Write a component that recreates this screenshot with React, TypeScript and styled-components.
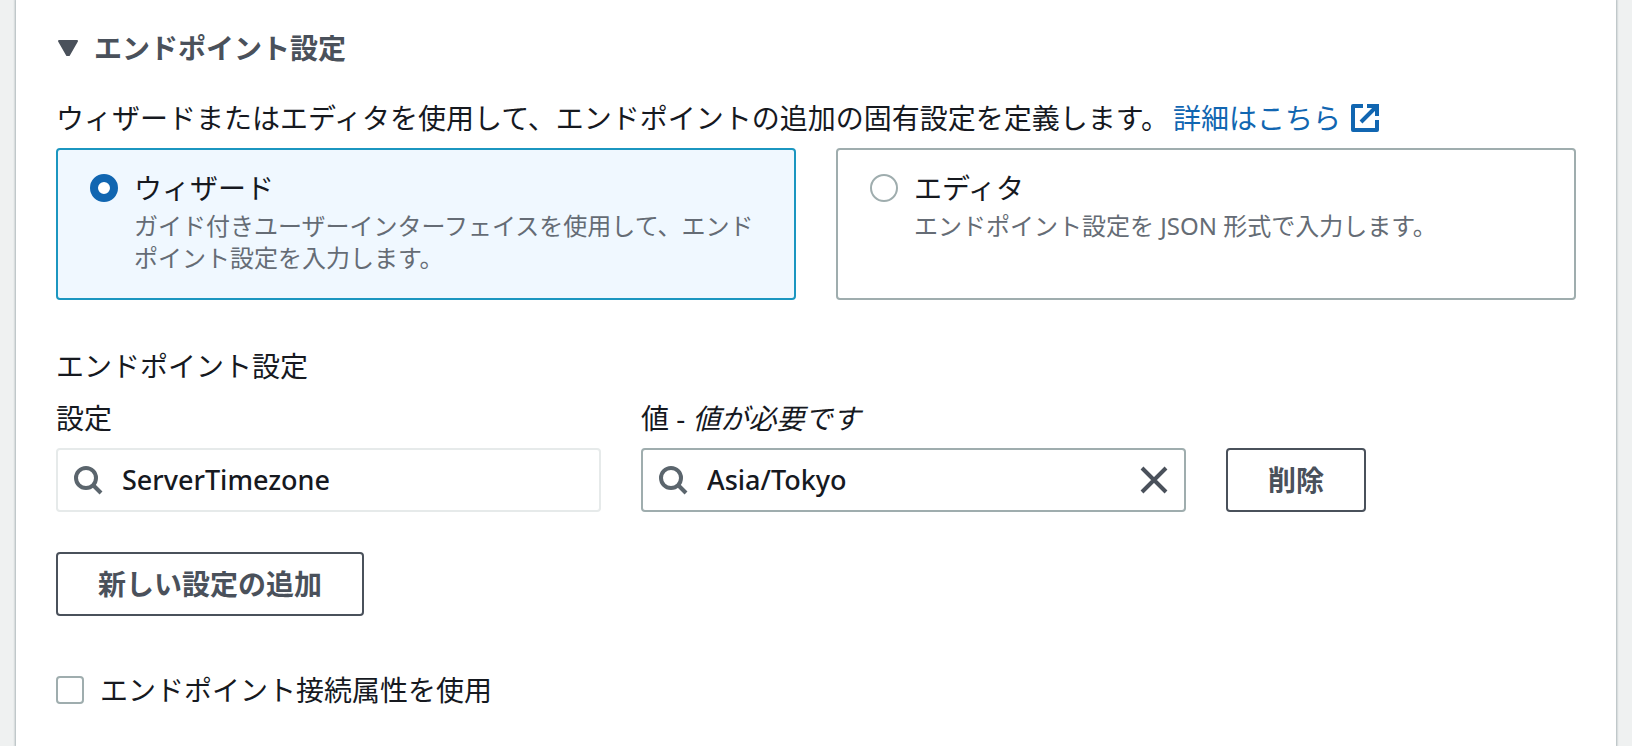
import React, { useState } from "react";
import styled, { createGlobalStyle } from "styled-components";

const color = {
  page: "#eff1f1",
  text: "#16191f",
  muted: "#656c75",
  strong: "#4a515b",
  link: "#1166b1",
  accent: "#1b96c0",
  selected: "#f0f8ff",
  border: "#9fadae",
  faint: "#e6eaea",
};

const GlobalStyle = createGlobalStyle`
  * { box-sizing: border-box; }
  body {
    margin: 0;
    background: ${color.page};
    color: ${color.text};
    font-family: "Noto Sans", "Noto Sans CJK JP", sans-serif;
    font-size: 28px;
    line-height: 44px;
  }
  button, input { font: inherit; color: inherit; }
`;

const Panel = styled.main`
  min-height: 100vh;
  margin: 0 16px;
  padding: 26px 40px 24px;
  background: #fff;
  box-shadow: 0 0 2px 1px #aab4b8;
`;

const Toggle = styled.button`
  display: flex;
  align-items: center;
  gap: 16px;
  padding: 0;
  border: 0;
  background: none;
  color: ${color.strong};
  font-weight: 700;
  cursor: pointer;
`;

const Heading = styled.h2`
  margin: 0;
  font-size: inherit;
`;

const Intro = styled.p`
  display: flex;
  align-items: center;
  flex-wrap: wrap;
  column-gap: 4px;
  margin: 26px 0 8px;
`;

const Link = styled.a`
  display: inline-flex;
  align-items: center;
  gap: 8px;
  color: ${color.link};
  text-decoration: none;
`;

const Tiles = styled.div`
  display: grid;
  grid-template-columns: 1fr 1fr;
  gap: 40px;
`;

const Tile = styled.label<{ $selected: boolean }>`
  display: flex;
  gap: 16px;
  padding: 16px 32px 24px;
  border: 2px solid ${(p) => (p.$selected ? color.accent : color.border)};
  border-radius: 4px;
  background: ${(p) => (p.$selected ? color.selected : "#fff")};
  cursor: pointer;
`;

const Radio = styled.input`
  appearance: none;
  flex: none;
  width: 28px;
  height: 28px;
  margin: 8px 0;
  border: 2px solid ${color.border};
  border-radius: 50%;
  background: #fff;
  &:checked { border: 8px solid ${color.link}; }
`;

const TileText = styled.span`
  display: flex;
  flex-direction: column;
`;

const TileDescription = styled.span`
  color: ${color.muted};
  font-size: 24px;
  line-height: 32px;
`;

const SectionLabel = styled.h3`
  margin: 44px 0 8px;
  font-size: inherit;
  font-weight: 400;
`;

const SettingRow = styled.div`
  display: grid;
  grid-template-columns: repeat(8, 1fr);
  align-items: end;
  column-gap: 40px;
`;

const Field = styled.div`
  grid-column: span 3;
  display: flex;
  flex-direction: column;
  gap: 8px;
`;

const SearchBox = styled.div<{ $disabled?: boolean }>`
  display: flex;
  align-items: center;
  gap: 18px;
  height: 64px;
  padding: 0 14px;
  border: 2px solid ${(p) => (p.$disabled ? color.faint : color.border)};
  border-radius: 4px;
  background: #fff;
`;

const SearchInput = styled.input`
  flex: 1;
  min-width: 0;
  padding: 0;
  border: 0;
  outline: 0;
  background: none;
  font-size: 27px;
  font-weight: 500;
`;

const ClearButton = styled.button`
  display: flex;
  padding: 0;
  border: 0;
  background: none;
  cursor: pointer;
`;

const Button = styled.button`
  justify-self: start;
  height: 64px;
  padding: 0 40px;
  border: 2px solid ${color.strong};
  border-radius: 4px;
  background: #fff;
  color: ${color.strong};
  font-weight: 700;
  white-space: nowrap;
  cursor: pointer;
`;

const AddRow = styled.div`
  margin: 40px 0 52px;
`;

const CheckLabel = styled.label`
  display: flex;
  align-items: center;
  gap: 16px;
`;

const Checkbox = styled.input`
  appearance: none;
  width: 28px;
  height: 28px;
  margin: 0;
  border: 2px solid ${color.border};
  border-radius: 4px;
  background: #fff;
  &:checked { background: ${color.link}; border-color: ${color.link}; }
`;

const CaretIcon = () => (
  <svg width="22" height="28" viewBox="0 0 22 28" aria-hidden="true">
    <path d="M3 7h18l-8 14h-2z" fill={color.strong} stroke={color.strong} strokeWidth="2" strokeLinejoin="round" />
  </svg>
);

const ExternalIcon = () => (
  <svg width="32" height="32" viewBox="0 0 32 32" fill="none" stroke={color.link} strokeWidth="4" aria-hidden="true">
    <path d="M14 4H4v24h24V18" strokeLinejoin="round" />
    <path d="M18 4h10v10M28 4 12 20" />
  </svg>
);

const SearchIcon = () => (
  <svg width="32" height="32" viewBox="0 0 32 32" fill="none" stroke="#5b656d" strokeWidth="4" aria-hidden="true">
    <circle cx="14" cy="14" r="10" />
    <path d="m21 21 8 8" />
  </svg>
);

const CloseIcon = () => (
  <svg width="32" height="32" viewBox="0 0 32 32" fill="none" stroke={color.strong} strokeWidth="4" aria-hidden="true">
    <path d="m4 4 24 24M28 4 4 28" />
  </svg>
);

export default function App() {
  const [mode, setMode] = useState("wizard");
  const [value, setValue] = useState("Asia/Tokyo");
  const tiles = [
    {
      id: "wizard",
      label: "ウィザード",
      description: "ガイド付きユーザーインターフェイスを使用して、エンドポイント設定を入力します。",
    },
    { id: "editor", label: "エディタ", description: "エンドポイント設定を JSON 形式で入力します。" },
  ];

  return (
    <>
      <GlobalStyle />
      <Panel lang="ja">
        <Heading>
          <Toggle type="button" aria-expanded="true">
            <CaretIcon />
            エンドポイント設定
          </Toggle>
        </Heading>
        <Intro>
          ウィザードまたはエディタを使用して、エンドポイントの追加の固有設定を定義します。
          <Link href="#">
            詳細はこちら
            <ExternalIcon />
          </Link>
        </Intro>
        <Tiles>
          {tiles.map((t) => (
            <Tile key={t.id} $selected={mode === t.id}>
              <Radio type="radio" name="mode" checked={mode === t.id} onChange={() => setMode(t.id)} />
              <TileText>
                <span>{t.label}</span>
                <TileDescription>{t.description}</TileDescription>
              </TileText>
            </Tile>
          ))}
        </Tiles>
        <SectionLabel>エンドポイント設定</SectionLabel>
        <SettingRow>
          <Field>
            <label htmlFor="setting">設定</label>
            <SearchBox $disabled>
              <SearchIcon />
              <SearchInput id="setting" value="ServerTimezone" readOnly />
            </SearchBox>
          </Field>
          <Field>
            <label htmlFor="value">
              値 - <em>値が必要です</em>
            </label>
            <SearchBox>
              <SearchIcon />
              <SearchInput id="value" value={value} onChange={(e) => setValue(e.target.value)} />
              <ClearButton type="button" aria-label="クリア" onClick={() => setValue("")}>
                <CloseIcon />
              </ClearButton>
            </SearchBox>
          </Field>
          <Button type="button">削除</Button>
        </SettingRow>
        <AddRow>
          <Button type="button">新しい設定の追加</Button>
        </AddRow>
        <CheckLabel>
          <Checkbox type="checkbox" />
          エンドポイント接続属性を使用
        </CheckLabel>
      </Panel>
    </>
  );
}
